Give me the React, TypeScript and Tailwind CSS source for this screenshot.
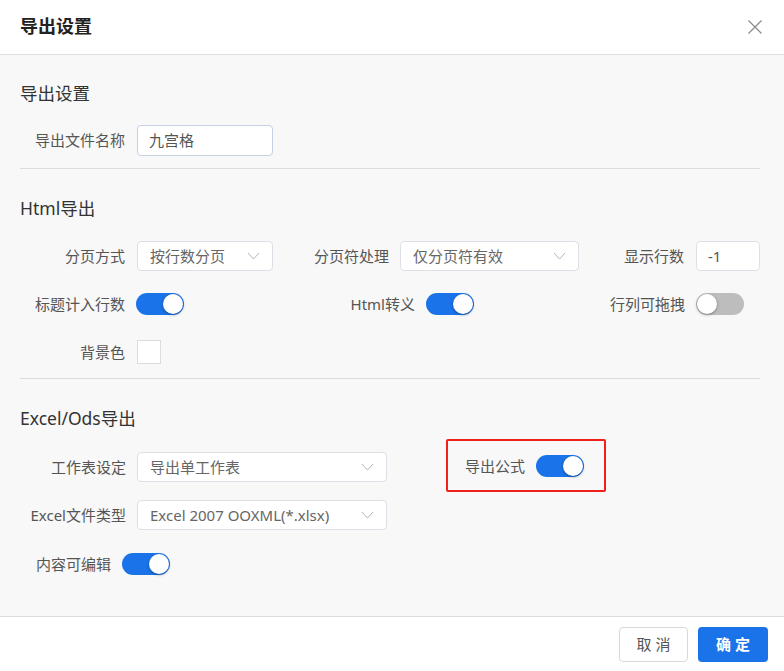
import { useState } from 'react';

const font = { fontFamily: '"Noto Sans", "Noto Sans CJK SC", sans-serif' };

function Chevron() {
  return (
    <svg width="13" height="8" viewBox="0 0 13 8" className="shrink-0">
      <path d="M1 1l5.5 6L12 1" fill="none" stroke="#b5b5b5" strokeWidth="1" />
    </svg>
  );
}

function Select({ value, w }: { value: string; w: string }) {
  return (
    <div className={`${w} h-[30px] flex items-center justify-between pl-3 pr-3 bg-white border border-[#dcdfe6] rounded text-[15px] text-[#666] shrink-0`}>
      <span className="truncate">{value}</span>
      <Chevron />
    </div>
  );
}

function Toggle({ on, onClick }: { on: boolean; onClick: () => void }) {
  return (
    <button
      onClick={onClick}
      className={`relative block w-[48px] h-[22px] rounded-full shrink-0 transition-colors ${on ? 'bg-[#1a73e8]' : 'bg-[#bdbdbd]'}`}
    >
      <span
        className={`absolute top-[1px] w-[20px] h-[20px] rounded-full bg-white shadow-[0_1px_3px_rgba(0,0,0,0.35)] transition-all ${on ? 'left-[27px]' : 'left-[1px]'}`}
      />
    </button>
  );
}

export default function App() {
  const [titleRows, setTitleRows] = useState(true);
  const [htmlEscape, setHtmlEscape] = useState(true);
  const [dragable, setDragable] = useState(false);
  const [formula, setFormula] = useState(true);
  const [editable, setEditable] = useState(true);

  return (
    <div className="w-[784px] h-[671px] bg-white flex flex-col text-[#555]" style={font}>
      {/* Header */}
      <div className="h-[55px] shrink-0 flex items-center justify-between pl-[20px] pr-[21px] border-b border-[#e0e0e0]">
        <h1 className="text-[18px] font-bold text-[#222] leading-none -mt-[2px]">导出设置</h1>
        <button className="-mt-[1px]">
          <svg width="16" height="16" viewBox="0 0 16 16">
            <path d="M1.5 1.5l13 13M14.5 1.5l-13 13" stroke="#8a8a8a" strokeWidth="1.2" fill="none" />
          </svg>
        </button>
      </div>

      {/* Body */}
      <div className="flex-1 bg-[#f8f8f8] pl-[20px] pr-[24px] text-[15px]">
        {/* 导出设置 */}
        <h2 className="text-[17.5px] text-[#333] mt-[26px] leading-[24px]">导出设置</h2>
        <div className="flex items-center mt-[20px] h-[31px]">
          <span className="w-[105px] text-right">导出文件名称</span>
          <div className="ml-[12px] w-[136px] h-[31px] flex items-center pl-[11px] bg-white border border-[#c4d0e4] rounded text-[#555]">
            九宫格
          </div>
        </div>
        <div className="h-px bg-[#dcdcdc] mt-[12px]" />

        {/* Html导出 */}
        <h2 className="text-[17.5px] text-[#333] mt-[27px] leading-[24px]">Html导出</h2>
        <div className="flex items-center mt-[21px] h-[30px]">
          <span className="w-[105px] text-right">分页方式</span>
          <div className="ml-[12px]"><Select value="按行数分页" w="w-[136px]" /></div>
          <span className="w-[116px] text-right">分页符处理</span>
          <div className="ml-[11px]"><Select value="仅分页符有效" w="w-[179px]" /></div>
          <span className="w-[105px] text-right">显示行数</span>
          <div className="ml-[12px] w-[64px] h-[30px] flex items-center pl-[11px] bg-white border border-[#dcdfe6] rounded text-[#555]">
            -1
          </div>
        </div>
        <div className="flex items-center mt-[22px] h-[22px]">
          <span className="w-[105px] text-right">标题计入行数</span>
          <div className="ml-[11px]"><Toggle on={titleRows} onClick={() => setTitleRows(!titleRows)} /></div>
          <span className="w-[231px] text-right">Html转义</span>
          <div className="ml-[11px]"><Toggle on={htmlEscape} onClick={() => setHtmlEscape(!htmlEscape)} /></div>
          <span className="w-[211px] text-right">行列可拖拽</span>
          <div className="ml-[11px]"><Toggle on={dragable} onClick={() => setDragable(!dragable)} /></div>
        </div>
        <div className="flex items-center mt-[25px] h-[24px]">
          <span className="w-[105px] text-right">背景色</span>
          <div className="ml-[12px] w-[24px] h-[24px] bg-white border border-[#dcdcdc]" />
        </div>
        <div className="h-px bg-[#dcdcdc] mt-[14px]" />

        {/* Excel/Ods导出 */}
        <h2 className="text-[17.5px] text-[#333] mt-[27px] leading-[24px]">Excel/Ods导出</h2>
        <div className="flex items-center mt-[22px] h-[30px]">
          <span className="w-[106px] text-right">工作表设定</span>
          <div className="ml-[11px]"><Select value="导出单工作表" w="w-[250px]" /></div>
          <div className="ml-[59px] w-[160px] h-[53px] -mt-[13px] -mb-[10px] border-2 border-[#f0201a] rounded-[2px] flex items-center pl-[17px] pt-[1px]">
            <span>导出公式</span>
            <div className="ml-[11px]"><Toggle on={formula} onClick={() => setFormula(!formula)} /></div>
          </div>
        </div>
        <div className="flex items-center mt-[18px] h-[30px]">
          <span className="w-[106px] text-right">Excel文件类型</span>
          <div className="ml-[11px]"><Select value="Excel 2007 OOXML(*.xlsx)" w="w-[250px]" /></div>
        </div>
        <div className="flex items-center mt-[23px] h-[22px] pl-[16px]">
          <span>内容可编辑</span>
          <div className="ml-[11px]"><Toggle on={editable} onClick={() => setEditable(!editable)} /></div>
        </div>
      </div>

      {/* Footer */}
      <div className="h-[55px] shrink-0 border-t border-[#dcdcdc] flex items-center justify-end gap-[10px] pr-[16px]">
        <button className="w-[69px] h-[35px] rounded border border-[#d9d9d9] bg-white text-[15px] text-[#555] tracking-[4px] pl-[4px]">取消</button>
        <button className="w-[70px] h-[35px] rounded bg-[#1a73e8] text-[15px] text-white font-bold tracking-[4px] pl-[4px]">确定</button>
      </div>
    </div>
  );
}
